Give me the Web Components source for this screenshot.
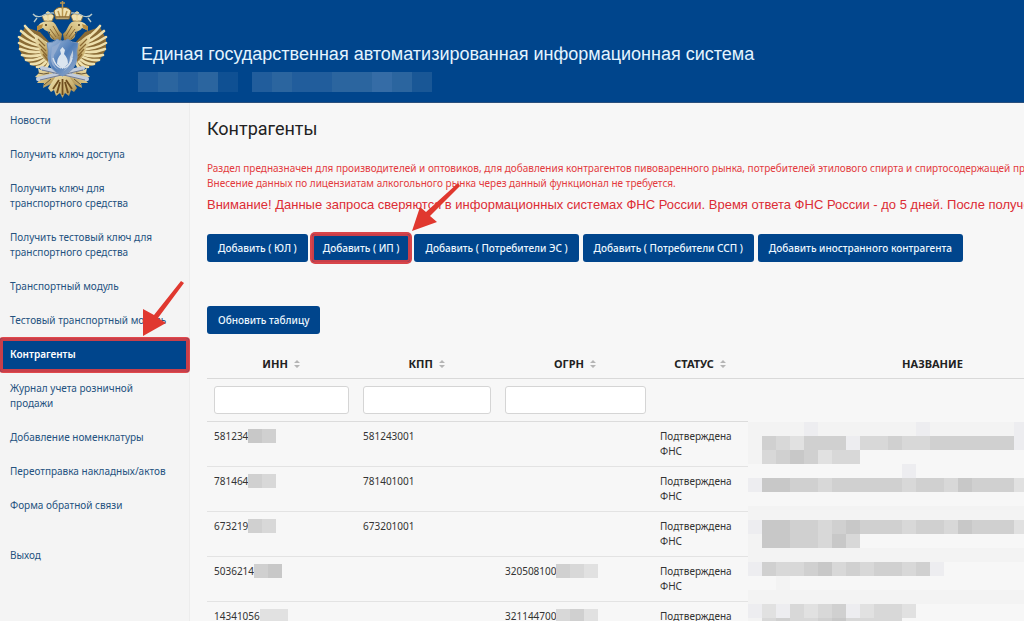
<!DOCTYPE html>
<html lang="ru">
<head>
<meta charset="utf-8">
<title>ЕГАИС - Контрагенты</title>
<style>
  body {
    margin: 0;
    height: 100vh;
    overflow: hidden;
    background-color: #f7f7f7;
    color: #333;
    font-family: "Noto Sans", "Open Sans", sans-serif;
    font-size: 10px;
    line-height: 15px;
  }
</style>
</head>
<body>
<egais-app></egais-app>

<template id="emblem-template">
  <style>
    :host { display: block; width: 91px; height: 98px; flex: none; }
    svg { display: block; width: 100%; height: 100%; }
  </style>
  <svg viewBox="17 0 91 98" role="img" aria-label="Герб">
    <defs>
      <linearGradient id="gold" x1="0" y1="0" x2="1" y2="1">
        <stop offset="0" stop-color="#f0e4b4"/>
        <stop offset=".6" stop-color="#cdb473"/>
        <stop offset="1" stop-color="#8f6d33"/>
      </linearGradient>
      <linearGradient id="steel" x1="0" y1="0" x2="1" y2="1">
        <stop offset="0" stop-color="#a9bfdc"/>
        <stop offset=".5" stop-color="#4f7db8"/>
        <stop offset="1" stop-color="#9fb3cf"/>
      </linearGradient>
      <g id="half">
        <!-- wing -->
        <path d="M50 43 L40 32 L25 27 L19 39 L19 49 L25 60 L34 66 L48 69Z" fill="#8a6b35"/>
        <g fill="none" stroke="#eee0ae" stroke-width="2.6" stroke-linecap="round">
          <path d="M46 43Q34 37 25 26"/>
          <path d="M46 45Q32 41 21 31"/>
          <path d="M46 47Q31 45 19 37"/>
          <path d="M46 49Q31 50 19 43"/>
          <path d="M46 51Q32 54 20 49"/>
          <path d="M46 53Q34 58 22 55"/>
          <path d="M46 55Q36 61 26 60"/>
          <path d="M47 57Q39 65 31 64"/>
          <path d="M48 59Q43 67 37 67"/>
          <path d="M49 62Q47 68 43 69"/>
        </g>
        <path d="M35 34Q44 38 49 47L48 62Q40 56 39 48Q34 42 35 34Z" fill="url(#gold)"/>
        <path d="M38 39L45 46M39 44L46 51M41 49L47 56M43 54L48 60" stroke="#8a6832" stroke-width="1.2"/>
        <!-- neck and head -->
        <path d="M61 40Q48 42 50 32Q45 31 43 28L38 30Q37 24 43 22Q53 18 57 27Q59 32 62 34Z" fill="url(#gold)"/>
        <path d="M43 24L37 26L37 31L42 28Z" fill="#b98d3f"/>
        <circle cx="46" cy="25" r="1" fill="#4b3515"/>
        <path d="M50 29L56 37M53 26L59 36M48 32L54 39" stroke="#8a6832" stroke-width="1"/>
        <!-- small crown -->
        <path d="M44 21L42 16Q46 13 48 15Q51 12 54 16L52 21Z" fill="#efe2b3" stroke="#927238" stroke-width=".8"/>
        <path d="M48 11V21M46 12.5H50" stroke="#e9d696" stroke-width="1.2"/>
        <!-- ribbon -->
        <path d="M55 13Q48 12 42 16Q36 18 33 14M37 18L34 22" fill="none" stroke="#b8c9c8" stroke-width="1.3"/>
        <!-- claw -->
        <path d="M51 71Q43 72 38 68L39 73L35 77L41 78L37 83L44 83L43 88L51 84L57 79Z" fill="url(#gold)"/>
        <path d="M38 73Q44 75 49 73M40 79L49 77M44 85L51 79" fill="none" stroke="#6a5738" stroke-width="1"/>
      </g>
    </defs>
    <use href="#half"/>
    <use href="#half" transform="matrix(-1 0 0 1 125 0)"/>
    <!-- main crown -->
    <path d="M56 19L54 11Q58 6 62.5 8Q67 6 71 11L69 19Z" fill="#efe2b3" stroke="#8b6a30" stroke-width="1"/>
    <path d="M62.5 1V17M60 3H65M58 11L60 17M67 11L65 17" stroke="#b9964f" stroke-width="1.5"/>
    <path d="M56 17H69" stroke="#8a6832" stroke-width="1.5"/>
    <!-- tail -->
    <path d="M56 76L48 88L51 92L54 90L56 96L60 93L62.5 98L65 93L69 96L71 90L74 92L77 88L69 76Z" fill="url(#gold)"/>
    <path d="M62.5 79V95M59 80L53 89M60 82L57 93M66 80L72 89M65 82L68 93" stroke="#6f4d1e" stroke-width="1.8"/>
    <!-- crossed batons -->
    <path d="M38 79L83 68M87 79L42 68" stroke="#c2ccdb" stroke-width="4" stroke-linecap="round"/>
    <path d="M40 80L83 70M85 80L42 70" stroke="#737b8f" stroke-width="1"/>
    <!-- shield -->
    <path d="M47 43Q54 43 57 39Q62.5 43 68 39Q71 43 78 43Q76 51 77 58Q76 70 62.5 76Q49 70 48 58Q49 51 47 43Z" fill="url(#steel)" stroke="#7694bd" stroke-width="1"/>
    <path d="M52 47Q59 44 61 41Q57 50 54 55Q51 64 59 70Q50 67 51 56Z" fill="#91abd0"/>
    <path d="M62.5 47L65 50L64 54Q68 58 68 64L62.5 69L57 64Q57 58 61 54L60 50Z" fill="#dbe5ef"/>
    <path d="M73 50Q75 62 63 72Q70 65 70 57Z" fill="#c3cfdf"/>
    <path d="M53 58Q55 66 61 68M72 58Q70 66 64 68" fill="none" stroke="#d6e0ec" stroke-width="1.5"/>
  </svg>
</template>

<script>
  // shades of the hidden-data blocks
  const SHADES = {
    grey: { a: '#c8c8c8', b: '#d0d0d0', c: '#d8d8d8', d: '#e1e1e1', e: '#ededf0', f: '#f3f3f3' },
    blue: { a: '#356ca6', b: '#2b659f', c: '#215d9c', d: '#195796', e: '#0f5093' }
  };

  class EgaisEmblem extends HTMLElement {
    constructor() {
      super();
      this.attachShadow({mode: 'open'});
      this.shadowRoot.append(document.querySelector('#emblem-template').content.cloneNode(true));
    }
  }

  // mosaic over private data: one letter is one cell, "/" starts a new line
  class PixelMosaic extends HTMLElement {
    connectedCallback() {
      const shades = SHADES[this.getAttribute('tone') || 'grey'];
      const rows = this.getAttribute('cells').split('/');
      const html = rows.map(row => `<div>${[...row].map(c =>
        `<i style="background-color:${shades[c] || 'transparent'}"></i>`).join('')}</div>`).join('');
      this.attachShadow({mode: 'open'}).innerHTML = `
      <style>
        :host { display: inline-block; vertical-align: top; }
        div { display: flex; height: var(--cell, 14px); }
        i { flex: none; width: var(--cell, 14px); }
      </style>
      ${html}`;
    }
  }

  class PointerArrow extends HTMLElement {
    connectedCallback() {
      const path = this.hasAttribute('steep')
        ? 'M0 55L0 28L11 34L38 0L41 2L15 37L23 42Z'
        : 'M0 55L8 31L14 36L46 7L48 10L18 40L25 46Z';
      this.attachShadow({mode: 'open'}).innerHTML = `
      <style>
        :host { display: block; pointer-events: none; }
        svg { display: block; width: 48px; height: 55px; }
      </style>
      <svg viewBox="0 0 48 55" aria-hidden="true"><path d="${path}" fill="#e0382f"/></svg>`;
    }
  }

  class PageHeader extends HTMLElement {
    constructor() {
      super();
      this.attachShadow({mode: 'open'}).innerHTML = `
      <style>
        :host { display: block; }
        header {
          display: flex;
          gap: 30px;
          height: 102px;
          padding-left: 17px;
          background-color: #00458c;
          border-bottom: 1px solid #2a4f7c;
        }
        .title {
          padding-top: 42px;
          color: #e4f4ff;
          font-family: "Liberation Sans", sans-serif;
          font-size: 18px;
          line-height: 24px;
          white-space: nowrap;
        }
        .title span { display: block; padding-left: 3px; }
        .user { display: flex; gap: 14px; padding-top: 6px; --cell: 20px; }
      </style>
      <header>
        <egais-emblem></egais-emblem>
        <div class="title">
          <span>Единая государственная автоматизированная информационная система</span>
          <div class="user">
            <pixel-mosaic tone="blue" cells="cbcbe"></pixel-mosaic>
            <pixel-mosaic tone="blue" cells="cbccbbabd"></pixel-mosaic>
          </div>
        </div>
      </header>`;
    }
  }

  class MenuItem extends HTMLElement {
    constructor() {
      super();
      this.attachShadow({mode: 'open'}).innerHTML = `
      <style>
        :host { display: block; position: relative; }
        a {
          display: block;
          padding: 9px 20px 10px 10px;
          color: #24527f;
          text-decoration: none;
        }
        :host([active]) a {
          color: white;
          background-color: #00458c;
          font-weight: 600;
          border-radius: 3px;
          box-shadow: inset 0 0 0 3px #c93f49, 0 0 0 1px #e0484b;
        }
        :host([separate]) { margin-top: 16px; }
        pointer-arrow { display: none; position: absolute; left: 143px; bottom: 36px; }
        :host([active]) pointer-arrow { display: block; }
      </style>
      <a href="#"><slot></slot></a>
      <pointer-arrow steep></pointer-arrow>`;
    }
  }

  class SideMenu extends HTMLElement {
    constructor() {
      super();
      this.attachShadow({mode: 'open'}).innerHTML = `
      <style>
        :host { display: block; padding-top: 1px; background-color: #f4f4f4; border-right: 1px solid #ececec; }
      </style>
      <nav><slot></slot></nav>`;
    }
  }

  class AppButton extends HTMLElement {
    constructor() {
      super();
      this.attachShadow({mode: 'open'}).innerHTML = `
      <style>
        :host { display: block; position: relative; flex: none; }
        button {
          display: block;
          height: 28px;
          padding: 0 11px;
          border: 0;
          border-radius: 3px;
          background-color: #00458c;
          color: #eef8ff;
          font: inherit;
          font-weight: 500;
          white-space: nowrap;
          cursor: pointer;
        }
        :host([marked]) button { box-shadow: inset 0 0 0 2px #c93f49, 0 0 0 2px #d8454a; }
        pointer-arrow { display: none; position: absolute; left: 100px; bottom: 31px; }
        :host([marked]) pointer-arrow { display: block; }
      </style>
      <button type="button"><slot></slot></button>
      <pointer-arrow></pointer-arrow>`;
    }
  }

  class ContractorsTable extends HTMLElement {
    connectedCallback() {
      const rows = [
        ['581234', 'ab', '581243001', '', ''],
        ['781464', 'bc', '781401001', '', ''],
        ['673219', 'bc', '673201001', '', ''],
        ['5036214', 'ba', '', '320508100', 'bcd'],
        ['14341056', 'dd', '', '321144700', 'cbd']
      ];
      const names = [
        'ffffefffffffeffffffe', 'fbcdbbbeccbccbbbbbbe', 'fcbabdcc', '...........e', 'eaabbcbbbbbcbbcabbbd',
        '', 'ffffffffffffffffffff', 'eaabbcbabbbcbbcabbbd', 'faabbcac', 'ffffffffffffffffffff',
        'ebccbacbcbbcbe', '..f', 'ffffffffffffffffffff', 'edecdcbedccd', 'fcbccbacccc'
      ].join('/');
      const sort = '<svg viewBox="0 0 8 10" aria-hidden="true"><path d="M4 1L7 4H1ZM4 9L7 6H1Z"/></svg>';
      const mosaic = cells => cells ? `<pixel-mosaic cells="${cells}"></pixel-mosaic>` : '';
      const body = rows.map((r, i) => `
        <tr>
          <td>${r[0]}${mosaic(r[1])}</td>
          <td>${r[2]}</td>
          <td>${r[3]}${mosaic(r[4])}</td>
          <td>Подтверждена ФНС</td>
          ${i === 0 ? `<td class="names" rowspan="5">${mosaic(names)}</td>` : ''}
        </tr>`).join('');
      this.attachShadow({mode: 'open'}).innerHTML = `
      <style>
        :host { display: block; }
        table { table-layout: fixed; width: 910px; border-collapse: separate; border-spacing: 0; }
        col.inn { width: 149px; }
        col.kpp { width: 142px; }
        col.ogrn { width: 155px; }
        col.status { width: 95px; }
        th {
          height: 30px;
          padding: 0 7px;
          border-bottom: 1px solid #d9d9d9;
          color: #222;
          font-size: 11px;
          text-transform: uppercase;
        }
        th svg { width: 8px; height: 10px; margin-left: 2px; vertical-align: -1px; fill: #b5b5b5; }
        .filter td { padding: 7px; border-bottom: 1px solid #dcdcdc; }
        .filter td:last-child { border-bottom: 0; }
        tbody td { height: 30px; padding: 7px; border-bottom: 1px solid #e3e3e3; vertical-align: top; }
        tbody td.names { padding: 0; border: 0; overflow: hidden; }
        input {
          display: block;
          box-sizing: border-box;
          width: 100%;
          height: 28px;
          border: 1px solid #d5d5d5;
          border-radius: 3px;
          background-color: white;
        }
      </style>
      <table>
        <colgroup><col class="inn"><col class="kpp"><col class="ogrn"><col class="status"><col></colgroup>
        <thead>
          <tr>
            <th>ИНН ${sort}</th><th>КПП ${sort}</th><th>ОГРН ${sort}</th><th>Статус ${sort}</th><th>Название</th>
          </tr>
          <tr class="filter">
            <td><input type="text" aria-label="ИНН"></td>
            <td><input type="text" aria-label="КПП"></td>
            <td><input type="text" aria-label="ОГРН"></td>
            <td></td><td></td>
          </tr>
        </thead>
        <tbody>${body}</tbody>
      </table>`;
    }
  }

  class EgaisApp extends HTMLElement {
    constructor() {
      super();
      this.attachShadow({mode: 'open'}).innerHTML = `
      <style>
        :host { display: flex; flex-direction: column; height: 100%; }
        .content { flex: 1; min-height: 0; display: grid; grid-template-columns: 190px 1fr; }
        main { min-width: 0; overflow: hidden; padding: 14px 0 0 17px; }
        h1 {
          margin: 0 0 20px;
          color: #222;
          font-family: Roboto, sans-serif;
          font-size: 18px;
          font-weight: 400;
          line-height: 24px;
        }
        p { margin: 0; color: #e33b40; white-space: nowrap; }
        .warning {
          padding-top: 4px;
          font-family: "Liberation Sans", sans-serif;
          font-size: 13px;
          line-height: 20px;
          color: #dc2d35;
        }
        .buttons { display: flex; gap: 4px; margin: 19px 0 44px; }
        .refresh { display: flex; margin-bottom: 14px; }
      </style>
      <page-header></page-header>
      <div class="content">
        <side-menu>
          <menu-item>Новости</menu-item>
          <menu-item>Получить ключ доступа</menu-item>
          <menu-item>Получить ключ для транспортного средства</menu-item>
          <menu-item>Получить тестовый ключ для транспортного средства</menu-item>
          <menu-item>Транспортный модуль</menu-item>
          <menu-item>Тестовый транспортный модуль</menu-item>
          <menu-item active>Контрагенты</menu-item>
          <menu-item>Журнал учета розничной продажи</menu-item>
          <menu-item>Добавление номенклатуры</menu-item>
          <menu-item>Переотправка накладных/актов</menu-item>
          <menu-item>Форма обратной связи</menu-item>
          <menu-item separate>Выход</menu-item>
        </side-menu>
        <main>
          <h1>Контрагенты</h1>
          <p>Раздел предназначен для производителей и оптовиков, для добавления контрагентов пивоваренного рынка, потребителей этилового спирта и спиртосодержащей пр</p>
          <p>Внесение данных по лицензиатам алкогольного рынка через данный функционал не требуется.</p>
          <p class="warning">Внимание! Данные запроса сверяются в информационных системах ФНС России. Время ответа ФНС России - до 5 дней. После получе</p>
          <div class="buttons">
            <app-button>Добавить ( ЮЛ )</app-button>
            <app-button marked>Добавить ( ИП )</app-button>
            <app-button>Добавить ( Потребители ЭС )</app-button>
            <app-button>Добавить ( Потребители ССП )</app-button>
            <app-button>Добавить иностранного контрагента</app-button>
          </div>
          <div class="refresh"><app-button>Обновить таблицу</app-button></div>
          <contractors-table></contractors-table>
        </main>
      </div>`;
    }
  }

  customElements.define('egais-emblem', EgaisEmblem);
  customElements.define('pixel-mosaic', PixelMosaic);
  customElements.define('pointer-arrow', PointerArrow);
  customElements.define('page-header', PageHeader);
  customElements.define('menu-item', MenuItem);
  customElements.define('side-menu', SideMenu);
  customElements.define('app-button', AppButton);
  customElements.define('contractors-table', ContractorsTable);
  customElements.define('egais-app', EgaisApp);
</script>
</body>
</html>
